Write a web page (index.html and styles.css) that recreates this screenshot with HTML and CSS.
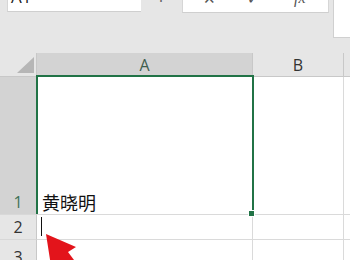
FILE: index.html
```html
<!DOCTYPE html>
<html>
<head>
<meta charset="utf-8">
<link rel="stylesheet" href="styles.css">
</head>
<body>
<div class="top">
  <div class="namebox"><span class="nb-text">A1</span></div>
  <div class="dots"><span>⋮</span></div>
  <div class="fbox">
    <span class="ic ic-x">✕</span>
    <span class="ic ic-ok">✓</span>
    <span class="ic ic-fx">fx</span>
  </div>
  <div class="rbox"></div>
</div>
<div class="sheet">
  <div class="corner"><div class="tri"></div></div>
  <div class="colh sel">A</div>
  <div class="colh">B</div>
  <div class="colh edge"></div>

  <div class="rowh selr">1</div>
  <div class="cell c1">黄晓明</div>
  <div class="cell"></div>
  <div class="cell edge"></div>

  <div class="rowh">2</div>
  <div class="cell"><span class="caret"></span></div>
  <div class="cell"></div>
  <div class="cell edge"></div>

  <div class="rowh">3</div>
  <div class="cell"></div>
  <div class="cell"></div>
  <div class="cell edge"></div>

  <div class="selbox"><span class="handle"></span></div>
  <svg class="arrow" width="350" height="260" viewBox="0 0 350 260">
    <polygon points="46,234 76,247 68,252 86,276 73,285 57,260 51,266" fill="#e3141b"/>
  </svg>
</div>
</body>
</html>
```

FILE: styles.css
```css
html, body {
  margin: 0;
  padding: 0;
}
body {
  width: 350px;
  height: 260px;
  overflow: hidden;
  background: #e6e6e6;
  font-family: "Open Sans", "Noto Sans", sans-serif;
  position: relative;
}
.top {
  height: 53px;
  display: flex;
  align-items: flex-start;
  overflow: hidden;
}
.namebox {
  margin-left: 7px;
  width: 133px;
  height: 11px;
  background: #fff;
  border-bottom: 1px solid #cfcfcf;
  border-left: 1px solid #d6d6d6;
  box-sizing: content-box;
  overflow: hidden;
  position: relative;
}
.nb-text {
  display: block;
  margin-top: -13px;
  margin-left: 3px;
  font-size: 17px;
  line-height: 20px;
  color: #222;
}
.dots {
  width: 41px;
  height: 4px;
  overflow: hidden;
  text-align: center;
  font-size: 14px;
  color: #666;
}
.dots span {
  display: block;
  margin-top: -9px;
  margin-left: -2px;
}
.fbox {
  width: 145px;
  height: 12px;
  background: #fff;
  border-bottom: 1px solid #cfcfcf;
  border-right: 1px solid #d6d6d6;
  border-left: 1px solid #d6d6d6;
  position: relative;
  overflow: hidden;
}
.ic {
  position: absolute;
  top: -10px;
  font-size: 15px;
  line-height: 16px;
  color: #555;
}
.ic-x { left: 20px; }
.ic-ok { left: 64px; }
.ic-fx { left: 111px; font-style: italic; font-family: "Liberation Serif", serif; font-size: 16px; }
.rbox {
  margin-left: 4px;
  flex: 1;
  height: 37px;
  background: #fff;
  border-left: 1px solid #d0d0d0;
  border-bottom: 1px solid #d0d0d0;
}
.sheet {
  display: grid;
  grid-template-columns: 37px 216px 91px 6px;
  grid-template-rows: 24px 138px 25px 30px;
  position: relative;
  background: #fff;
}
.sheet > div {
  box-sizing: border-box;
}
.corner {
  background: #e6e6e6;
  border-right: 1px solid #c8c8c8;
  border-bottom: 1px solid #c8c8c8;
  position: relative;
}
.tri {
  position: absolute;
  right: 2px;
  bottom: 3px;
  width: 0;
  height: 0;
  border-left: 17px solid transparent;
  border-bottom: 16px solid #b6b6b6;
}
.colh {
  background: #e6e6e6;
  border-right: 1px solid #c8c8c8;
  border-bottom: 1px solid #c8c8c8;
  text-align: center;
  font-size: 16px;
  line-height: 22px;
  color: #333;
  padding-top: 1px;
}
.colh.sel {
  background: #d3d3d3;
  color: #3f5e4e;
}
.rowh {
  background: #e6e6e6;
  border-right: 1px solid #c8c8c8;
  border-bottom: 1px solid #d8d8d8;
  font-size: 16px;
  color: #333;
  display: flex;
  align-items: flex-end;
  justify-content: center;
  padding-bottom: 1px;
  line-height: 21px;
}
.rowh.selr {
  background: #d3d3d3;
  color: #3d7358;
}
.cell {
  border-right: 1px solid #dadada;
  border-bottom: 1px solid #dadada;
  position: relative;
}
.edge {
  border-right: none;
}
.c1 {
  display: flex;
  align-items: flex-end;
  padding-left: 5px;
  padding-bottom: 1px;
  font-family: "Noto Sans CJK SC", sans-serif;
  font-size: 18px;
  line-height: 22px;
  color: #111;
}
.caret {
  position: absolute;
  left: 4px;
  top: 2px;
  width: 1px;
  height: 19px;
  background: #111;
}
.selbox {
  position: absolute;
  left: 36px;
  top: 22px;
  width: 218px;
  height: 139px;
  border: 2px solid #217346;
  border-bottom: none;
  box-sizing: border-box;
}
.handle {
  position: absolute;
  right: -3px;
  bottom: -3px;
  width: 5px;
  height: 5px;
  background: #217346;
  border: 1px solid #fff;
}
.arrow {
  position: absolute;
  left: 0;
  top: -53px;
  pointer-events: none;
}
```
